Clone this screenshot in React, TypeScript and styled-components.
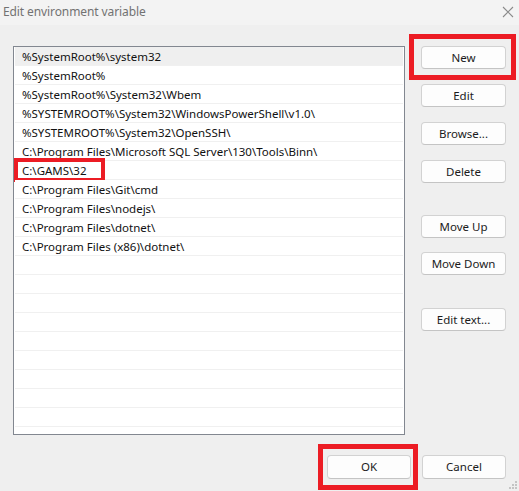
import React from "react";
import styled, { createGlobalStyle } from "styled-components";

const Global = createGlobalStyle`
  html, body { margin: 0; padding: 0; background: #efefef; }
  body { font-family: "Noto Sans", "Segoe UI", sans-serif; }
`;

const Dialog = styled.div`
  width: 519px;
  height: 491px;
  background: #efefef;
  display: flex;
  flex-direction: column;
  position: relative;
  overflow: hidden;
`;

const TitleBar = styled.div`
  height: 25px;
  background: #f3f3f3;
  display: flex;
  align-items: center;
  justify-content: space-between;
  padding: 0 5px 2px 3px;
  box-sizing: border-box;
`;

const Title = styled.span`
  font-size: 12px;
  color: #727272;
  letter-spacing: -0.1px;
`;

const Body = styled.div`
  flex: 1;
  display: flex;
  flex-direction: column;
  padding: 21px 13px 0 13px;
`;

const Main = styled.div`
  display: flex;
  gap: 16px;
`;

const List = styled.div`
  width: 392px;
  height: 389px;
  box-sizing: border-box;
  border: 1px solid #828790;
  background: #fff;
  display: flex;
  flex-direction: column;
  padding: 0 1px;
`;

const Row = styled.div<{ $selected?: boolean }>`
  height: 19px;
  flex: none;
  box-sizing: border-box;
  border-bottom: 1px solid #f0f0f0;
  background: ${(p) => (p.$selected ? "#efefef" : "#fff")};
  font-size: 11.5px;
  color: #111;
  padding-left: 7px;
  display: flex;
  align-items: center;
  white-space: nowrap;
  position: relative;
`;

const Side = styled.div`
  width: 85px;
  display: flex;
  flex-direction: column;
`;

const Group = styled.div<{ $top: number; $gap: number }>`
  display: flex;
  flex-direction: column;
  gap: ${(p) => p.$gap}px;
  margin-top: ${(p) => p.$top}px;
`;

const Anchor = styled.div`
  position: relative;
  display: flex;
`;

const Button = styled.button<{ $w?: number; $h?: number }>`
  width: ${(p) => p.$w ?? 85}px;
  height: ${(p) => p.$h ?? 23}px;
  box-sizing: border-box;
  border: 1px solid #d2d2d2;
  border-bottom-color: #c4c4c4;
  border-radius: 4px;
  background: #fdfdfd;
  font-family: "Noto Sans", "Segoe UI", sans-serif;
  font-size: 11.5px;
  color: #1b1b1b;
  padding: 0 0 1px;
  display: flex;
  align-items: center;
  justify-content: center;
`;

const Mark = styled.div<{ $t: number; $r: number; $b: number; $l: number; $w?: number }>`
  position: absolute;
  top: ${(p) => p.$t}px;
  right: ${(p) => p.$r}px;
  bottom: ${(p) => p.$b}px;
  left: ${(p) => p.$l}px;
  border: ${(p) => p.$w ?? 5}px solid #ec1c24;
  pointer-events: none;
`;

const Footer = styled.div`
  display: flex;
  justify-content: flex-end;
  gap: 11px;
  margin-top: 20px;
`;

const Grip = styled.svg`
  position: absolute;
  right: 2px;
  bottom: 2px;
`;

const paths = [
  "%SystemRoot%\\system32",
  "%SystemRoot%",
  "%SystemRoot%\\System32\\Wbem",
  "%SYSTEMROOT%\\System32\\WindowsPowerShell\\v1.0\\",
  "%SYSTEMROOT%\\System32\\OpenSSH\\",
  "C:\\Program Files\\Microsoft SQL Server\\130\\Tools\\Binn\\",
  "C:\\GAMS\\32",
  "C:\\Program Files\\Git\\cmd",
  "C:\\Program Files\\nodejs\\",
  "C:\\Program Files\\dotnet\\",
  "C:\\Program Files (x86)\\dotnet\\",
];

const rows = [...paths, ...Array(20 - paths.length).fill("")];

export default function App() {
  return (
    <>
      <Global />
      <Dialog>
        <TitleBar>
          <Title>Edit environment variable</Title>
          <svg width="12" height="12" viewBox="0 0 12 12">
            <path d="M1 1 L11 11 M11 1 L1 11" stroke="#8a8a8a" strokeWidth="1.1" />
          </svg>
        </TitleBar>
        <Body>
          <Main>
            <List>
              {rows.map((t, i) => (
                <Row key={i} $selected={i === 0}>
                  {t}
                  {t === "C:\\GAMS\\32" && <Mark $t={-3} $r={298} $b={-3} $l={-1} $w={4} />}
                </Row>
              ))}
            </List>
            <Side>
              <Group $top={0} $gap={15}>
                <Anchor>
                  <Button>New</Button>
                  <Mark $t={-12} $r={-10} $b={-11} $l={-12} />
                </Anchor>
                <Button>Edit</Button>
                <Button>Browse...</Button>
                <Button>Delete</Button>
              </Group>
              <Group $top={32} $gap={14}>
                <Button>Move Up</Button>
                <Button>Move Down</Button>
              </Group>
              <Group $top={33} $gap={14}>
                <Button>Edit text...</Button>
              </Group>
            </Side>
          </Main>
          <Footer>
            <Anchor>
              <Button $w={84} $h={24}>OK</Button>
              <Mark $t={-11} $r={-7} $b={-11} $l={-9} />
            </Anchor>
            <Button $w={84} $h={24}>Cancel</Button>
          </Footer>
        </Body>
        <Grip width="8" height="8" viewBox="0 0 8 8">
          <rect x="6" y="0" width="2" height="2" fill="#c4c4c4" />
          <rect x="3" y="3" width="2" height="2" fill="#c4c4c4" />
          <rect x="6" y="3" width="2" height="2" fill="#c4c4c4" />
          <rect x="0" y="6" width="2" height="2" fill="#c4c4c4" />
          <rect x="3" y="6" width="2" height="2" fill="#c4c4c4" />
          <rect x="6" y="6" width="2" height="2" fill="#c4c4c4" />
        </Grip>
      </Dialog>
    </>
  );
}
